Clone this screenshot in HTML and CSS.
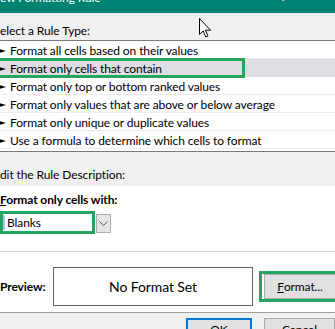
FILE: index.html
```html
<!DOCTYPE html>
<html>
<head>
<meta charset="utf-8">
<link rel="stylesheet" href="styles.css">
</head>
<body>
<div class="dialog">
  <div class="titlebar">
    <span class="title">ew Formatting Rule</span>
    <span class="tb-btn help">?</span>
    <span class="tb-btn close">✕</span>
  </div>
  <div class="group-label top">elect a Rule Type:</div>
  <ul class="rule-list">
    <li><svg class="arrow" width="7" height="4" viewBox="0 0 7 4"><polygon points="0,0 7,2 0,4" fill="#000"/></svg>Format all cells based on their values</li>
    <li class="selected"><span class="mark"></span><svg class="arrow" width="7" height="4" viewBox="0 0 7 4"><polygon points="0,0 7,2 0,4" fill="#000"/></svg>Format only cells that contain</li>
    <li><svg class="arrow" width="7" height="4" viewBox="0 0 7 4"><polygon points="0,0 7,2 0,4" fill="#000"/></svg>Format only top or bottom ranked values</li>
    <li><svg class="arrow" width="7" height="4" viewBox="0 0 7 4"><polygon points="0,0 7,2 0,4" fill="#000"/></svg>Format only values that are above or below average</li>
    <li><svg class="arrow" width="7" height="4" viewBox="0 0 7 4"><polygon points="0,0 7,2 0,4" fill="#000"/></svg>Format only unique or duplicate values</li>
    <li><svg class="arrow" width="7" height="4" viewBox="0 0 7 4"><polygon points="0,0 7,2 0,4" fill="#000"/></svg>Use a formula to determine which cells to format</li>
  </ul>
  <div class="group-label desc">dit the Rule Description:</div>
  <div class="panel">
    <div class="bold-label"><u>F</u>ormat only cells with:</div>
    <div class="combo-row">
      <div class="combo"><span class="combo-text">Blanks</span></div>
      <div class="drop-btn"><svg width="9" height="5" viewBox="0 0 9 5"><polyline points="0.5,0.5 4.5,4.5 8.5,0.5" fill="none" stroke="#555" stroke-width="1"/></svg></div>
    </div>
    <div class="sep"></div>
    <div class="preview-row">
      <span class="preview-label">Preview:</span>
      <div class="preview-box">No Format Set</div>
      <div class="format-wrap"><div class="btn format-btn"><u>F</u>ormat...</div></div>
    </div>
  </div>
  <div class="footer">
    <div class="btn ok">OK</div>
    <div class="btn cancel">Cancel</div>
  </div>
</div>
<svg class="cursor" width="13" height="20" viewBox="0 0 13 20"><polygon points="0.5,0.5 0.5,16.5 4.2,13 6.8,19 9,18 6.5,12.2 11.5,12.2" fill="#fff" stroke="#000" stroke-width="1" stroke-linejoin="miter"/></svg>
</body>
</html>
```
FILE: styles.css
```css
* { box-sizing: border-box; }
html, body { margin: 0; padding: 0; }
body {
  width: 335px;
  height: 329px;
  overflow: hidden;
  background: #f0f0f0;
  font-family: "Lato", "Noto Sans", sans-serif;
  font-size: 12px;
  letter-spacing: -0.1px;
  color: #000;
  position: relative;
}
.dialog { width: 335px; height: 329px; overflow: hidden; }
.titlebar {
  height: 13px;
  background: #008272;
  color: #fff;
  display: flex;
  overflow: hidden;
  font-size: 12px;
  line-height: 16px;
}
.title { margin-top: -10px; flex: 1; }
.tb-btn { margin-top: -11px; }
.help { margin-right: 36px; }
.close { margin-right: 3px; }
.group-label {
  line-height: 16px;
}
.group-label.top { height: 27px; padding-top: 10px; }
.group-label.desc { height: 34px; padding-top: 15px; }
.rule-list {
  list-style: none;
  margin: 0;
  padding: 0 0 2px 0;
  background: #fff;
  border-top: 1px solid #7a7a7a;
  border-bottom: 1px solid #7a7a7a;
}
.rule-list li {
  position: relative;
  height: 18px;
  padding-top: 3px;
  line-height: 14px;
  border-bottom: 1px solid #ededed;
  display: flex;
  align-items: center;
  white-space: nowrap;
}
.rule-list li.selected { background: #dddde2; border-bottom-color: #dddde2; }
.arrow { margin-left: -1px; margin-right: 4px; flex: none; }
.mark {
  position: absolute;
  left: -3px;
  top: -1px;
  width: 248px;
  height: 20px;
  border: 3px solid #25a55f;
}
.panel { background: #fff; padding-top: 6px; height: 126px; }
.bold-label { font-weight: bold; line-height: 16px; }
.combo-row { display: flex; margin-top: 3px; align-items: flex-start; }
.combo {
  width: 95px;
  height: 23px;
  border: 3px solid #25a55f;
  display: flex;
  align-items: center;
}
.combo-text { border-left: 2px solid #9fcdf0; padding-left: 2px; line-height: 15px; }
.drop-btn {
  width: 15px;
  height: 19px;
  margin-top: 3px;
  margin-left: 1px;
  border: 1px solid #adadad;
  background: #e5e5e5;
  display: flex;
  align-items: center;
  justify-content: center;
}
.sep { height: 1px; background: #cfcfcf; margin-top: 17px; }
.preview-row { display: flex; align-items: center; margin-top: 15px; }
.preview-label { width: 53px; font-weight: bold; flex: none; }
.preview-box {
  width: 200px;
  height: 39px;
  border: 1px solid #646464;
  background: #fff;
  flex: none;
  display: flex;
  align-items: center;
  justify-content: center;
  font-size: 14px;
}
.format-wrap {
  margin-left: 6px;
  border: 3px solid #25a55f;
  padding: 0 2px;
  flex: none;
}
.btn {
  background: #e1e1e1;
  border: 1px solid #adadad;
  display: flex;
  align-items: center;
  justify-content: center;
}
.format-btn { width: 72px; height: 25px; }
.footer {
  border-top: 1px solid #a0a0a0;
  display: flex;
  gap: 12px;
  padding: 5px 0 0 186px;
}
.ok { width: 71px; height: 23px; border: 2px solid #0078d7; }
.cancel { width: 71px; height: 23px; flex: none; }
.cursor { position: absolute; left: 199px; top: 18px; }
```
